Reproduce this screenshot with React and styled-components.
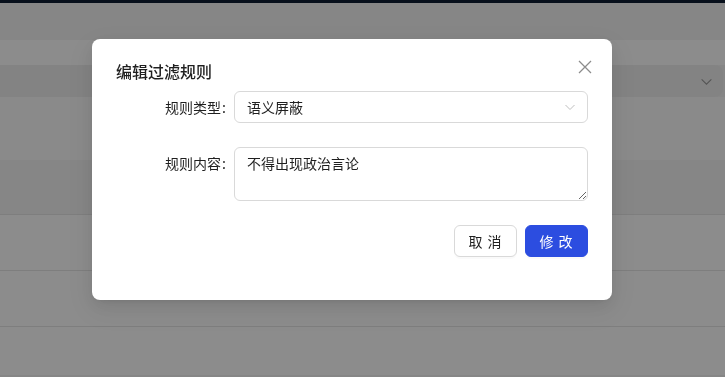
import React from 'react';
import styled, { createGlobalStyle } from 'styled-components';

const GlobalStyle = createGlobalStyle`
  html, body {
    margin: 0;
    padding: 0;
    width: 725px;
    height: 377px;
    overflow: hidden;
    font-family: 'Noto Sans CJK SC', 'Noto Sans', sans-serif;
  }
  * { box-sizing: border-box; }
`;

const Page = styled.div`
  width: 725px;
  height: 377px;
  background: #f5f5f5;
  display: flex;
  flex-direction: column;
`;

const TopBar = styled.div`
  height: 3px;
  background: #0f1e33;
`;

const Toolbar = styled.div`
  height: 37px;
  background: #f4f4f4;
`;

const Section = styled.div`
  height: ${({ h }) => h}px;
  background: ${({ bg }) => bg || '#ffffff'};
  border-bottom: ${({ line }) => (line ? '1px solid #e6e6e6' : 'none')};
  display: flex;
  align-items: center;
`;

const FilterBand = styled.div`
  height: 32px;
  margin-right: 2px;
  background: #efefef;
  border-radius: 0 8px 8px 0;
  display: flex;
  align-items: center;
  justify-content: flex-end;
  padding-right: 10px;
`;

const Overlay = styled.div`
  position: fixed;
  inset: 0;
  background: rgba(0, 0, 0, 0.45);
  padding: 39px 0 0 92px;
`;

const Modal = styled.div`
  width: 520px;
  background: #ffffff;
  border-radius: 8px;
  box-shadow: 0 6px 16px 0 rgba(0, 0, 0, 0.08), 0 3px 6px -4px rgba(0, 0, 0, 0.12),
    0 9px 28px 8px rgba(0, 0, 0, 0.05);
  padding: 20px 24px 20px;
  position: relative;
`;

const Title = styled.div`
  font-size: 16px;
  line-height: 24px;
  font-weight: 500;
  color: rgba(0, 0, 0, 0.88);
  margin-bottom: 8px;
`;

const Close = styled.button`
  position: absolute;
  top: 17px;
  right: 16px;
  width: 22px;
  height: 22px;
  border: none;
  background: transparent;
  padding: 0;
  display: flex;
  align-items: center;
  justify-content: center;
  color: rgba(0, 0, 0, 0.45);
`;

const FormRow = styled.div`
  display: flex;
  align-items: flex-start;
  margin-bottom: 24px;
`;

const Label = styled.label`
  width: 118px;
  flex-shrink: 0;
  text-align: right;
  font-size: 14px;
  line-height: 32px;
  color: rgba(0, 0, 0, 0.88);
  white-space: nowrap;

  &::after {
    content: ':';
    margin: 0 8px 0 1px;
  }
`;

const SelectBox = styled.div`
  flex: 1;
  height: 32px;
  border: 1px solid #d9d9d9;
  border-radius: 6px;
  display: flex;
  align-items: center;
  justify-content: space-between;
  padding: 0 11px 0 12px;
  font-size: 14px;
  color: rgba(0, 0, 0, 0.88);
`;

const TextArea = styled.textarea`
  flex: 1;
  height: 54px;
  border: 1px solid #d9d9d9;
  border-radius: 6px;
  padding: 4px 11px 4px 12px;
  font-family: 'Noto Sans CJK SC', 'Noto Sans', sans-serif;
  font-size: 14px;
  line-height: 22px;
  color: rgba(0, 0, 0, 0.88);
  outline: none;
  margin: 0;
`;

const Footer = styled.div`
  display: flex;
  justify-content: flex-end;
  gap: 8px;
  margin-bottom: 23px;
`;

const Button = styled.button`
  width: 63px;
  height: 32px;
  border-radius: 6px;
  font-family: 'Noto Sans CJK SC', 'Noto Sans', sans-serif;
  font-size: 14px;
  letter-spacing: 1px;
  border: 1px solid ${({ primary }) => (primary ? '#2c4de0' : '#d9d9d9')};
  background: ${({ primary }) => (primary ? '#2c4de0' : '#ffffff')};
  color: ${({ primary }) => (primary ? '#ffffff' : 'rgba(0, 0, 0, 0.88)')};
  box-shadow: 0 2px 0 rgba(0, 0, 0, 0.02);
  padding: 0;
`;

const Chevron = ({ color = '#bfbfbf', size = 12 }) => (
  <svg width={size} height={size} viewBox="0 0 12 12" fill="none">
    <path d="M1.5 4 L6 8.5 L10.5 4" stroke={color} strokeWidth="1" />
  </svg>
);

const App = () => (
  <>
    <GlobalStyle />
    <Page>
      <TopBar />
      <Toolbar />
      <Section h={25} />
      <FilterBand>
        <Chevron color="#9a9a9a" size={13} />
      </FilterBand>
      <Section h={63} bg="#fbfbfb" />
      <Section h={55} bg="#f4f4f4" line />
      <Section h={56} line />
      <Section h={56} line />
      <Section h={48} />
    </Page>
    <Overlay>
      <Modal>
        <Title>编辑过滤规则</Title>
        <Close aria-label="close">
          <svg width="14" height="14" viewBox="0 0 14 14" fill="none">
            <path d="M1 1 L13 13 M13 1 L1 13" stroke="currentColor" strokeWidth="1.3" />
          </svg>
        </Close>
        <FormRow>
          <Label>规则类型</Label>
          <SelectBox>
            <span>语义屏蔽</span>
            <Chevron />
          </SelectBox>
        </FormRow>
        <FormRow>
          <Label>规则内容</Label>
          <TextArea defaultValue="不得出现政治言论" />
        </FormRow>
        <Footer>
          <Button>取 消</Button>
          <Button primary>修 改</Button>
        </Footer>
      </Modal>
    </Overlay>
  </>
);

export default App;
